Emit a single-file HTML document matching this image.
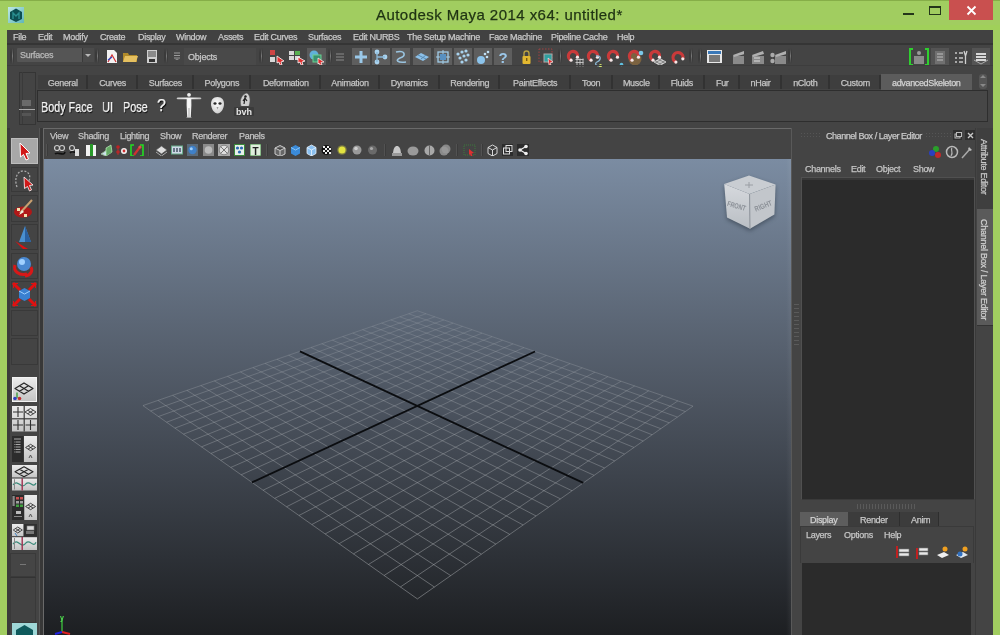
<!DOCTYPE html>
<html><head><meta charset="utf-8"><style>
html,body{margin:0;padding:0;}
body{width:1000px;height:635px;overflow:hidden;position:relative;background:#a1cd60;font-family:"Liberation Sans",sans-serif;}
body>div,body>span,body>svg{position:absolute;display:block;}
.t{white-space:nowrap;line-height:1;will-change:transform;-webkit-text-stroke:0.25px currentColor;}
.c{text-align:center;}
</style></head><body>
<div style="left:0px;top:0px;width:1000px;height:1px;background:#86ae48"></div>
<div style="left:0px;top:25px;width:1000px;height:4.5px;background:#a0d05a"></div>
<svg style="left:8px;top:7px;" width="16" height="16" viewBox="0 0 16 16"><defs><linearGradient id="mi" x1="0" y1="0" x2="1" y2="1"><stop offset="0" stop-color="#bfe9e6"/><stop offset="1" stop-color="#5fb6b9"/></linearGradient></defs><rect width="16" height="16" fill="url(#mi)"/><path d="M8 1.5 L14 5 L14 12 L8 15 L2 12 L2 5Z" fill="#0d4f52"/><path d="M5 12 L5 6 L8 9 L11 6 L11 12" stroke="#2a8f90" stroke-width="1.4" fill="none"/></svg>
<span class="t" style="left:376px;top:6.8px;font-size:15px;letter-spacing:0.45px;color:#1f3313">Autodesk Maya 2014 x64: untitled*</span>
<div style="left:903px;top:13px;width:11px;height:2px;background:#24361a"></div>
<div style="left:929px;top:6px;width:12px;height:9px;border:1px solid #24361a;border-top-width:2px;box-sizing:border-box"></div>
<div style="left:949px;top:0px;width:44px;height:20px;background:#c9504f"></div>
<svg style="left:966px;top:5px;" width="11" height="11" viewBox="0 0 11 11"><path d="M1.5 1.5 L9.5 9.5 M9.5 1.5 L1.5 9.5" stroke="#fff" stroke-width="1.8"/></svg>
<div style="left:7px;top:29.5px;width:986px;height:605.5px;background:#444444"></div>
<div style="left:7px;top:29.5px;width:986px;height:13.5px;background:#414141"></div>
<div style="left:7px;top:42.5px;width:986px;height:2px;background:#353535"></div>
<span class="t" style="left:13.4px;top:33.48px;font-size:9px;color:#c8c8c8;letter-spacing:-0.3px">File</span>
<span class="t" style="left:37.8px;top:33.48px;font-size:9px;color:#c8c8c8;letter-spacing:-0.3px">Edit</span>
<span class="t" style="left:63px;top:33.48px;font-size:9px;color:#c8c8c8;letter-spacing:-0.3px">Modify</span>
<span class="t" style="left:100px;top:33.48px;font-size:9px;color:#c8c8c8;letter-spacing:-0.3px">Create</span>
<span class="t" style="left:137.6px;top:33.48px;font-size:9px;color:#c8c8c8;letter-spacing:-0.3px">Display</span>
<span class="t" style="left:176px;top:33.48px;font-size:9px;color:#c8c8c8;letter-spacing:-0.3px">Window</span>
<span class="t" style="left:217.6px;top:33.48px;font-size:9px;color:#c8c8c8;letter-spacing:-0.3px">Assets</span>
<span class="t" style="left:253.8px;top:33.48px;font-size:9px;color:#c8c8c8;letter-spacing:-0.3px">Edit Curves</span>
<span class="t" style="left:307.9px;top:33.48px;font-size:9px;color:#c8c8c8;letter-spacing:-0.3px">Surfaces</span>
<span class="t" style="left:352.9px;top:33.48px;font-size:9px;color:#c8c8c8;letter-spacing:-0.3px">Edit NURBS</span>
<span class="t" style="left:406.9px;top:33.48px;font-size:9px;color:#c8c8c8;letter-spacing:-0.3px">The Setup Machine</span>
<span class="t" style="left:489px;top:33.48px;font-size:9px;color:#c8c8c8;letter-spacing:-0.3px">Face Machine</span>
<span class="t" style="left:550.9px;top:33.48px;font-size:9px;color:#c8c8c8;letter-spacing:-0.3px">Pipeline Cache</span>
<span class="t" style="left:616.8px;top:33.48px;font-size:9px;color:#c8c8c8;letter-spacing:-0.3px">Help</span>
<div style="left:10px;top:47px;width:4px;height:18px;background:linear-gradient(180deg,rgba(68,68,68,0),#3a3a3a 30%,#3a3a3a 70%,rgba(68,68,68,0))"></div>
<div style="left:11.5px;top:48px;width:1px;height:16px;background:linear-gradient(180deg,rgba(120,120,120,0),#7a7a7a 50%,rgba(120,120,120,0))"></div>
<div style="left:17px;top:48px;width:77px;height:14px;background:#555;border-radius:1px"></div>
<div style="left:81.5px;top:48px;width:12px;height:14px;background:#4b4b4b;border-left:1px solid #3a3a3a;box-sizing:border-box"></div>
<svg style="left:84px;top:53px;" width="8" height="5" viewBox="0 0 8 5"><path d="M1 1 L7 1 L4 4Z" fill="#b8b8b8"/></svg>
<span class="t" style="left:19.5px;top:51.48px;font-size:9px;color:#b9b9b9;letter-spacing:-0.3px">Surfaces</span>
<div style="left:95px;top:48px;width:4px;height:16px;background:linear-gradient(180deg,rgba(68,68,68,0),#3a3a3a 30%,#3a3a3a 70%,rgba(68,68,68,0))"></div>
<div style="left:96.5px;top:49px;width:1px;height:14px;background:linear-gradient(180deg,rgba(120,120,120,0),#7a7a7a 50%,rgba(120,120,120,0))"></div>
<svg style="left:105px;top:49px;" width="13" height="15" viewBox="0 0 13 15"><path d="M2 1 L9 1 L12 4 L12 14 L2 14Z" fill="#f2f2f2"/><path d="M3 13 L7 6 L11 13" stroke="#d23030" stroke-width="1.2" fill="none"/><path d="M3 11 L7 8" stroke="#2850d0" stroke-width="1.2"/></svg>
<svg style="left:122px;top:50px;" width="17" height="13" viewBox="0 0 17 13"><path d="M1 3 L6 3 L7 5 L15 5 L15 12 L1 12Z" fill="#b08a2a"/><path d="M1 12 L3 6 L16 6 L14 12Z" fill="#e5c060"/></svg>
<svg style="left:146px;top:49px;" width="12" height="15" viewBox="0 0 12 15"><rect x="1" y="1" width="10" height="13" fill="#cfcfcf"/><rect x="2" y="2" width="8" height="6" fill="#8a8a8a"/><rect x="3" y="10" width="6" height="3" fill="#333"/></svg>
<div style="left:164px;top:48px;width:4px;height:16px;background:linear-gradient(180deg,rgba(68,68,68,0),#3a3a3a 30%,#3a3a3a 70%,rgba(68,68,68,0))"></div>
<div style="left:165.5px;top:49px;width:1px;height:14px;background:linear-gradient(180deg,rgba(120,120,120,0),#7a7a7a 50%,rgba(120,120,120,0))"></div>
<svg style="left:173px;top:51px;" width="8" height="10" viewBox="0 0 8 10"><path d="M1 2 H7 M1 4.5 H7 M1 7 H7" stroke="#9a9a9a" stroke-width="1"/><path d="M2 9 L4 7.5 L6 9" fill="#888"/></svg>
<div style="left:184px;top:48px;width:72px;height:16.5px;background:#494949"></div>
<span class="t" style="left:187.8px;top:53.48px;font-size:9px;color:#c8c8c8;letter-spacing:-0.2px">Objects</span>
<div style="left:259px;top:48px;width:4px;height:16px;background:linear-gradient(180deg,rgba(68,68,68,0),#3a3a3a 30%,#3a3a3a 70%,rgba(68,68,68,0))"></div>
<div style="left:260.5px;top:49px;width:1px;height:14px;background:linear-gradient(180deg,rgba(120,120,120,0),#7a7a7a 50%,rgba(120,120,120,0))"></div>
<svg style="left:268px;top:49px;" width="18" height="16" viewBox="0 0 18 16"><rect x="2" y="1" width="5" height="5" fill="#d04545"/><rect x="2" y="8" width="5" height="5" fill="#d8d8d8"/><path d="M9 7 L16 12 L13 13 L14 16 L12 16 L11 13 L9 14Z" fill="#e03030" stroke="#fff" stroke-width="0.8"/></svg>
<svg style="left:288px;top:49px;" width="18" height="16" viewBox="0 0 18 16"><rect x="1" y="2" width="5" height="4" fill="#d8d8d8"/><rect x="7" y="2" width="5" height="4" fill="#58b050"/><rect x="1" y="7" width="5" height="4" fill="#d8d8d8"/><rect x="7" y="7" width="5" height="4" fill="#d8d8d8"/><path d="M10 8 L17 12 L14 13 L15 16 L13 16 L12 13 L10 14Z" fill="#e03030" stroke="#fff" stroke-width="0.8"/></svg>
<div style="left:307px;top:48px;width:19px;height:18px;background:#5a5a5a"></div>
<svg style="left:308px;top:49px;" width="18" height="16" viewBox="0 0 18 16"><circle cx="6" cy="6" r="4.5" fill="#60b0d8"/><rect x="5" y="6" width="8" height="7" fill="#3a9070" stroke="#6ad090"/><path d="M10 9 L16 13 L13 13.5 L14 16 L12 16 L11 14 L10 15Z" fill="#e03030" stroke="#fff" stroke-width="0.7"/></svg>
<div style="left:328px;top:48px;width:4px;height:16px;background:linear-gradient(180deg,rgba(68,68,68,0),#3a3a3a 30%,#3a3a3a 70%,rgba(68,68,68,0))"></div>
<div style="left:329.5px;top:49px;width:1px;height:14px;background:linear-gradient(180deg,rgba(120,120,120,0),#7a7a7a 50%,rgba(120,120,120,0))"></div>
<svg style="left:334px;top:51px;" width="12" height="12" viewBox="0 0 12 12"><path d="M2 3 H10 M2 6 H10 M2 9 H10" stroke="#8a8a8a"/></svg>
<div style="left:352px;top:47.6px;width:18px;height:18.4px;background:#5e5e5e"></div>
<div style="left:372.4px;top:47.6px;width:18px;height:18.4px;background:#5e5e5e"></div>
<div style="left:392.4px;top:47.6px;width:18px;height:18.4px;background:#5e5e5e"></div>
<div style="left:413px;top:47.6px;width:18px;height:18.4px;background:#5e5e5e"></div>
<div style="left:433.6px;top:47.6px;width:18px;height:18.4px;background:#5e5e5e"></div>
<div style="left:453.6px;top:47.6px;width:18px;height:18.4px;background:#5e5e5e"></div>
<div style="left:473.6px;top:47.6px;width:18px;height:18.4px;background:#5e5e5e"></div>
<div style="left:494.4px;top:47.6px;width:18px;height:18.4px;background:#5e5e5e"></div>
<svg style="left:352px;top:47.6px;" width="18" height="18" viewBox="0 0 18 18"><path d="M9 3 V15 M3 9 H15" stroke="#9ac8e8" stroke-width="3"/></svg>
<svg style="left:372.4px;top:47.6px;" width="18" height="18" viewBox="0 0 18 18"><circle cx="5" cy="4" r="2.4" fill="#a9d3ef"/><circle cx="5" cy="14" r="2.4" fill="#a9d3ef"/><circle cx="13" cy="9" r="2.4" fill="#a9d3ef"/><path d="M5 4 V14 M5 9 H13" stroke="#8ab8d8" stroke-width="1.3"/></svg>
<svg style="left:392.4px;top:47.6px;" width="18" height="18" viewBox="0 0 18 18"><path d="M4 4 C14 2 14 8 8 10 C3 12 5 15 14 14" stroke="#9ac4e0" stroke-width="1.6" fill="none"/></svg>
<svg style="left:413px;top:47.6px;" width="18" height="18" viewBox="0 0 18 18"><path d="M2 9 L8 5 L16 9 L10 13Z" fill="#8cc0e8"/><path d="M5 7 L13 11 M8 11 L13 7" stroke="#5a8ab0"/></svg>
<svg style="left:433.6px;top:47.6px;" width="18" height="18" viewBox="0 0 18 18"><rect x="4" y="4" width="10" height="10" fill="none" stroke="#a0cce8" stroke-width="1.3"/><path d="M9 2 V16 M2 9 H16" stroke="#a0cce8"/><rect x="6" y="6" width="6" height="6" fill="#5890c0"/></svg>
<svg style="left:453.6px;top:47.6px;" width="18" height="18" viewBox="0 0 18 18"><g fill="#a9d3ef"><circle cx="4" cy="6" r="1.6"/><circle cx="8" cy="4" r="1.6"/><circle cx="12" cy="3" r="1.6"/><circle cx="6" cy="10" r="1.6"/><circle cx="10" cy="8" r="1.6"/><circle cx="14" cy="7" r="1.6"/><circle cx="8" cy="14" r="1.6"/><circle cx="12" cy="12" r="1.6"/></g></svg>
<svg style="left:473.6px;top:47.6px;" width="18" height="18" viewBox="0 0 18 18"><circle cx="7" cy="12" r="4" fill="#8cc4ec"/><g fill="#c0e0f5"><circle cx="11" cy="6" r="1.3"/><circle cx="14" cy="4" r="1.3"/><circle cx="13" cy="9" r="1.3"/></g></svg>
<svg style="left:494.4px;top:47.6px;will-change:transform;" width="18" height="18" viewBox="0 0 18 18"><text x="9" y="15" font-family="Liberation Sans" font-weight="bold" font-size="15" fill="#9cc8ea" text-anchor="middle">?</text></svg>
<svg style="left:521px;top:49px;" width="11" height="16" viewBox="0 0 11 16"><path d="M3 7 V4.5 A2.5 2.5 0 0 1 8 4.5 V7" stroke="#b8a040" stroke-width="1.4" fill="none"/><rect x="1.5" y="7" width="8" height="8" rx="1" fill="#e3b830"/><rect x="5" y="9" width="1.4" height="3" fill="#7a5a10"/></svg>
<svg style="left:538px;top:48px;" width="17" height="17" viewBox="0 0 17 17"><rect x="1" y="1" width="13" height="13" fill="none" stroke="#a04040" stroke-dasharray="1.5 1.5"/><rect x="6" y="6" width="8" height="8" fill="#30a0a0" stroke="#aaa"/><path d="M10 10 L15 14 L12 15 L13 17 L11 17Z" fill="#e03030" stroke="#fff" stroke-width="0.6"/></svg>
<div style="left:558px;top:48px;width:4px;height:16px;background:linear-gradient(180deg,rgba(68,68,68,0),#3a3a3a 30%,#3a3a3a 70%,rgba(68,68,68,0))"></div>
<div style="left:559.5px;top:49px;width:1px;height:14px;background:linear-gradient(180deg,rgba(120,120,120,0),#7a7a7a 50%,rgba(120,120,120,0))"></div>
<svg style="left:566px;top:49px;" width="19" height="18" viewBox="0 0 19 18"><path d="M11.44 8.19 A4.6 4.6 0 1 0 5.06 11.17" stroke="#c93a3a" stroke-width="3.2" fill="none"/><circle cx="11.44" cy="8.19" r="1.6" fill="#f4e8e8"/><circle cx="5.06" cy="11.17" r="1.6" fill="#f4e8e8"/><path d="M9.5 10.5 h8 M9.5 13.5 h8 M9.5 16.5 h8 M11 9.5 v8 M14 9.5 v8 M17 9.5 v8" stroke="#c8c8c8" stroke-width="0.9"/></svg>
<svg style="left:586px;top:49px;" width="19" height="18" viewBox="0 0 19 18"><path d="M11.44 8.19 A4.6 4.6 0 1 0 5.06 11.17" stroke="#c93a3a" stroke-width="3.2" fill="none"/><circle cx="11.44" cy="8.19" r="1.6" fill="#f4e8e8"/><circle cx="5.06" cy="11.17" r="1.6" fill="#f4e8e8"/><path d="M10 7 C16 6 15 11 11 13 C8 15 10 17 14 17" stroke="#8ab4d0" stroke-width="1.3" fill="none"/><circle cx="14.5" cy="16.5" r="1.6" fill="#d8e870"/></svg>
<svg style="left:606px;top:49px;" width="19" height="18" viewBox="0 0 19 18"><path d="M11.44 8.19 A4.6 4.6 0 1 0 5.06 11.17" stroke="#c93a3a" stroke-width="3.2" fill="none"/><circle cx="11.44" cy="8.19" r="1.6" fill="#f4e8e8"/><circle cx="5.06" cy="11.17" r="1.6" fill="#f4e8e8"/><circle cx="15.5" cy="15.5" r="1.8" fill="#60c0e0"/></svg>
<svg style="left:627px;top:49px;" width="19" height="18" viewBox="0 0 19 18"><circle cx="8" cy="10" r="6.5" fill="#8a6a40" opacity="0.8"/><path d="M11.44 8.19 A4.6 4.6 0 1 0 5.06 11.17" stroke="#c93a3a" stroke-width="3.2" fill="none"/><circle cx="11.44" cy="8.19" r="1.6" fill="#f4e8e8"/><circle cx="5.06" cy="11.17" r="1.6" fill="#f4e8e8"/><circle cx="14" cy="4" r="2.3" fill="#7ac8e8"/></svg>
<svg style="left:648px;top:49px;" width="19" height="18" viewBox="0 0 19 18"><path d="M6 13 L12 9.5 L18 13 L12 16.5Z" fill="#888" stroke="#ddd" stroke-width="0.8"/><path d="M9 11.2 L15 14.8 M15 11.2 L9 14.8" stroke="#ddd" stroke-width="0.8"/><path d="M11.44 8.19 A4.6 4.6 0 1 0 5.06 11.17" stroke="#c93a3a" stroke-width="3.2" fill="none"/><circle cx="11.44" cy="8.19" r="1.6" fill="#f4e8e8"/><circle cx="5.06" cy="11.17" r="1.6" fill="#f4e8e8"/></svg>
<svg style="left:669px;top:49px;" width="19" height="18" viewBox="0 0 19 18"><path d="M13.83 9.79 A5 5 0 1 0 6.89 13.03" stroke="#c93a3a" stroke-width="3.2" fill="none"/><circle cx="13.83" cy="9.79" r="1.6" fill="#f4e8e8"/><circle cx="6.89" cy="13.03" r="1.6" fill="#f4e8e8"/></svg>
<div style="left:689px;top:48px;width:4px;height:16px;background:linear-gradient(180deg,rgba(68,68,68,0),#3a3a3a 30%,#3a3a3a 70%,rgba(68,68,68,0))"></div>
<div style="left:690.5px;top:49px;width:1px;height:14px;background:linear-gradient(180deg,rgba(120,120,120,0),#7a7a7a 50%,rgba(120,120,120,0))"></div>
<div style="left:698px;top:48px;width:4px;height:16px;background:linear-gradient(180deg,rgba(68,68,68,0),#3a3a3a 30%,#3a3a3a 70%,rgba(68,68,68,0))"></div>
<div style="left:699.5px;top:49px;width:1px;height:14px;background:linear-gradient(180deg,rgba(120,120,120,0),#7a7a7a 50%,rgba(120,120,120,0))"></div>
<svg style="left:706px;top:48px;" width="17" height="17" viewBox="0 0 17 17"><rect x="1" y="2" width="15" height="13" fill="#e8e8e8"/><rect x="2" y="3" width="13" height="3" fill="#3a78b8"/><rect x="3" y="7" width="11" height="7" fill="#787878"/></svg>
<svg style="left:731px;top:49px;" width="13" height="16" viewBox="0 0 13 16"><path d="M2 7 L14 7 L14 15 L2 15Z" fill="#8a8a8a"/><path d="M2 6 L13 2 L14 5 L3 8Z" fill="#b0b0b0"/></svg>
<svg style="left:750px;top:49px;" width="14" height="16" viewBox="0 0 14 16"><path d="M2 7 L14 7 L14 15 L2 15Z" fill="#8a8a8a"/><path d="M2 6 L13 2 L14 5 L3 8Z" fill="#b0b0b0"/><path d="M4 9 h6 M4 12 h6" stroke="#ddd"/></svg>
<svg style="left:769px;top:49px;" width="17" height="16" viewBox="0 0 17 16"><circle cx="3.5" cy="6" r="2.2" fill="#aaa"/><circle cx="3.5" cy="12" r="2.2" fill="#aaa"/><g transform="translate(4 0)"><path d="M2 7 L14 7 L14 15 L2 15Z" fill="#8a8a8a"/><path d="M2 6 L13 2 L14 5 L3 8Z" fill="#b0b0b0"/></g></svg>
<div style="left:788px;top:48px;width:4px;height:16px;background:linear-gradient(180deg,rgba(68,68,68,0),#3a3a3a 30%,#3a3a3a 70%,rgba(68,68,68,0))"></div>
<div style="left:789.5px;top:49px;width:1px;height:14px;background:linear-gradient(180deg,rgba(120,120,120,0),#7a7a7a 50%,rgba(120,120,120,0))"></div>
<svg style="left:908px;top:48px;" width="22" height="18" viewBox="0 0 22 18"><path d="M5 1 H2 V17 H5 M17 1 H20 V17 H17" stroke="#2fd02f" stroke-width="2" fill="none"/><rect x="6" y="8" width="10" height="8" fill="#8a8a8a"/><circle cx="11" cy="5" r="2" fill="#9a9a9a"/></svg>
<div style="left:931px;top:48px;width:18px;height:18px;background:#545454"></div>
<svg style="left:932px;top:49px;" width="16" height="16" viewBox="0 0 16 16"><rect x="3" y="2" width="10" height="13" fill="#707070"/><path d="M5 5 h6 M5 8 h6 M5 11 h6" stroke="#c0c0c0"/></svg>
<svg style="left:953px;top:49px;" width="15" height="16" viewBox="0 0 15 16"><path d="M2 4 h2 M6 4 h4 M2 9 h2 M6 9 h4 M2 13 h2 M6 13 h4" stroke="#c8c8c8" stroke-width="1.3"/><path d="M11 2 L12.5 7 L14 2 M12.5 7 V15" stroke="#d0d0d0" stroke-width="1.3" fill="none"/></svg>
<div style="left:971.8px;top:48px;width:18px;height:18px;background:#545454"></div>
<svg style="left:972px;top:49px;" width="18" height="16" viewBox="0 0 18 16"><path d="M4 5 h10 M4 8 h10 M4 11 h10" stroke="#d8d8d8" stroke-width="2"/><path d="M2 11 L9 15 L16 11" stroke="#aaa" fill="none"/></svg>
<div style="left:7px;top:65px;width:986px;height:1px;background:#3d3d3d"></div>
<div style="left:18.5px;top:72px;width:17px;height:53px;background:#444;border:1px solid #353535;box-sizing:border-box"></div>
<div style="left:21.5px;top:72px;width:1px;height:52px;background:#3a3a3a"></div>
<div style="left:22px;top:100px;width:9px;height:5.5px;background:#6a6a6a"></div>
<div style="left:19px;top:109px;width:16px;height:1px;background:#aaa"></div>
<div style="left:22px;top:113px;width:9px;height:3px;background:#555"></div>
<div style="left:37.5px;top:75px;width:50.5px;height:14px;background:#3e3e3e;border-right:2px solid #323232;box-sizing:border-box"></div>
<span class="t c" style="left:37.5px;width:49.5px;top:79px;font-size:9px;color:#c4c4c4;letter-spacing:-0.3px">General</span>
<div style="left:88px;top:75px;width:50px;height:14px;background:#3e3e3e;border-right:2px solid #323232;box-sizing:border-box"></div>
<span class="t c" style="left:88px;width:49px;top:79px;font-size:9px;color:#c4c4c4;letter-spacing:-0.3px">Curves</span>
<div style="left:138px;top:75px;width:55.75px;height:14px;background:#3e3e3e;border-right:2px solid #323232;box-sizing:border-box"></div>
<span class="t c" style="left:138px;width:54.75px;top:79px;font-size:9px;color:#c4c4c4;letter-spacing:-0.3px">Surfaces</span>
<div style="left:193.75px;top:75px;width:56.75px;height:14px;background:#3e3e3e;border-right:2px solid #323232;box-sizing:border-box"></div>
<span class="t c" style="left:193.75px;width:55.75px;top:79px;font-size:9px;color:#c4c4c4;letter-spacing:-0.3px">Polygons</span>
<div style="left:250.5px;top:75px;width:70.5px;height:14px;background:#3e3e3e;border-right:2px solid #323232;box-sizing:border-box"></div>
<span class="t c" style="left:250.5px;width:69.5px;top:79px;font-size:9px;color:#c4c4c4;letter-spacing:-0.3px">Deformation</span>
<div style="left:321px;top:75px;width:59px;height:14px;background:#3e3e3e;border-right:2px solid #323232;box-sizing:border-box"></div>
<span class="t c" style="left:321px;width:58px;top:79px;font-size:9px;color:#c4c4c4;letter-spacing:-0.3px">Animation</span>
<div style="left:380px;top:75px;width:59.5px;height:14px;background:#3e3e3e;border-right:2px solid #323232;box-sizing:border-box"></div>
<span class="t c" style="left:380px;width:58.5px;top:79px;font-size:9px;color:#c4c4c4;letter-spacing:-0.3px">Dynamics</span>
<div style="left:439.5px;top:75px;width:60.5px;height:14px;background:#3e3e3e;border-right:2px solid #323232;box-sizing:border-box"></div>
<span class="t c" style="left:439.5px;width:59.5px;top:79px;font-size:9px;color:#c4c4c4;letter-spacing:-0.3px">Rendering</span>
<div style="left:500px;top:75px;width:71.25px;height:14px;background:#3e3e3e;border-right:2px solid #323232;box-sizing:border-box"></div>
<span class="t c" style="left:500px;width:70.25px;top:79px;font-size:9px;color:#c4c4c4;letter-spacing:-0.3px">PaintEffects</span>
<div style="left:571.25px;top:75px;width:41.25px;height:14px;background:#3e3e3e;border-right:2px solid #323232;box-sizing:border-box"></div>
<span class="t c" style="left:571.25px;width:40.25px;top:79px;font-size:9px;color:#c4c4c4;letter-spacing:-0.3px">Toon</span>
<div style="left:612.5px;top:75px;width:47.5px;height:14px;background:#3e3e3e;border-right:2px solid #323232;box-sizing:border-box"></div>
<span class="t c" style="left:612.5px;width:46.5px;top:79px;font-size:9px;color:#c4c4c4;letter-spacing:-0.3px">Muscle</span>
<div style="left:660px;top:75px;width:44.5px;height:14px;background:#3e3e3e;border-right:2px solid #323232;box-sizing:border-box"></div>
<span class="t c" style="left:660px;width:43.5px;top:79px;font-size:9px;color:#c4c4c4;letter-spacing:-0.3px">Fluids</span>
<div style="left:704.5px;top:75px;width:35.5px;height:14px;background:#3e3e3e;border-right:2px solid #323232;box-sizing:border-box"></div>
<span class="t c" style="left:704.5px;width:34.5px;top:79px;font-size:9px;color:#c4c4c4;letter-spacing:-0.3px">Fur</span>
<div style="left:740px;top:75px;width:42px;height:14px;background:#3e3e3e;border-right:2px solid #323232;box-sizing:border-box"></div>
<span class="t c" style="left:740px;width:41px;top:79px;font-size:9px;color:#c4c4c4;letter-spacing:-0.3px">nHair</span>
<div style="left:782px;top:75px;width:47.5px;height:14px;background:#3e3e3e;border-right:2px solid #323232;box-sizing:border-box"></div>
<span class="t c" style="left:782px;width:46.5px;top:79px;font-size:9px;color:#c4c4c4;letter-spacing:-0.3px">nCloth</span>
<div style="left:829.5px;top:75px;width:51.5px;height:14px;background:#3e3e3e;border-right:2px solid #323232;box-sizing:border-box"></div>
<span class="t c" style="left:829.5px;width:50.5px;top:79px;font-size:9px;color:#c4c4c4;letter-spacing:-0.3px">Custom</span>
<div style="left:881px;top:74px;width:90.5px;height:15.5px;background:#5c5c5c"></div>
<span class="t c" style="left:881px;width:90.5px;top:79px;font-size:9px;color:#d4d4d4;letter-spacing:-0.35px">advancedSkeleton</span>
<svg style="left:977px;top:73px;" width="12" height="17" viewBox="0 0 12 17"><rect x="2" y="1" width="8" height="15" rx="3" fill="#555"/><path d="M3 5 L6 2 L9 5Z M3 11 L6 14 L9 11Z" fill="#888"/></svg>
<div style="left:36.5px;top:89.5px;width:951px;height:32.5px;background:#474747;border:1px solid #2e2e2e;box-sizing:border-box"></div>
<span class="t" style="left:40.5px;top:99.8px;font-size:14.5px;color:#f4f4f4;transform:scaleX(0.745);transform-origin:0 0;font-weight:normal;text-shadow:1px 1px 1px #000;">Body Face</span>
<span class="t" style="left:101.5px;top:99.8px;font-size:14.5px;color:#f4f4f4;transform:scaleX(0.76);transform-origin:0 0;font-weight:normal;text-shadow:1px 1px 1px #000;">UI</span>
<span class="t" style="left:122.5px;top:99.8px;font-size:14.5px;color:#f4f4f4;transform:scaleX(0.745);transform-origin:0 0;font-weight:normal;text-shadow:1px 1px 1px #000;">Pose</span>
<span class="t" style="left:156.5px;top:97.5px;font-size:16px;font-weight:bold;color:#f4f4f4;font-weight:normal;text-shadow:1px 1px 1px #000;">?</span>
<svg style="left:176px;top:92px;" width="27" height="27" viewBox="0 0 27 27"><defs><linearGradient id="sk" x1="0" x2="1"><stop offset="0" stop-color="#c8c8c8"/><stop offset="0.5" stop-color="#fafafa"/><stop offset="1" stop-color="#b8b8b8"/></linearGradient></defs><circle cx="13" cy="2.8" r="1.9" fill="#eee"/><path d="M1.5 5.6 L24.5 5.6 L25.5 6.6 L24.5 7.2 L15.3 7.2 L15.4 13 L15.1 19 L14.8 25 L16 25.6 L10 25.6 L11.2 25 L10.9 19 L10.6 13 L10.7 7.2 L1.5 7.2 L0.5 6.6Z" fill="url(#sk)"/><path d="M13 16 V25" stroke="#777" stroke-width="0.6"/></svg>
<svg style="left:210px;top:96px;" width="15" height="19" viewBox="0 0 15 19"><defs><radialGradient id="mk" cx="0.45" cy="0.4" r="0.6"><stop offset="0" stop-color="#fff"/><stop offset="1" stop-color="#cfcfcf"/></radialGradient></defs><path d="M7.5 1 C3 1 1 4 1 8 C1 13 4.5 17.5 7.5 17.5 C10.5 17.5 14 13 14 8 C14 4 12 1 7.5 1Z" fill="url(#mk)"/><ellipse cx="5" cy="7.5" rx="1.6" ry="1.3" fill="#2a2a2a"/><ellipse cx="10" cy="7.5" rx="1.6" ry="1.3" fill="#2a2a2a"/><path d="M6.5 11 L7.5 13.5 L8.5 11Z" fill="#999"/></svg>
<svg style="left:233px;top:92px;will-change:transform;" width="22" height="24" viewBox="0 0 22 24"><rect x="1" y="15" width="20" height="9" rx="1" fill="#3a3a3a"/><text x="11" y="22.5" font-family="Liberation Sans" font-weight="bold" font-size="9" fill="#e6e6e6" text-anchor="middle">bvh</text><path d="M8 14 C6 8 9 2 14 1 C17 3 18 8 16 14" fill="#cfcfcf" stroke="#555" stroke-width="0.6"/><path d="M11 12 L12 6 L14 9 M12 6 L10 9" stroke="#222" stroke-width="1.2" fill="none"/><circle cx="12.5" cy="4.5" r="1.2" fill="#222"/></svg>
<div style="left:43px;top:128px;width:749px;height:507px;background:#444;border-left:1px solid #6a6a6a;border-top:1px solid #6a6a6a;box-sizing:border-box"></div>
<span class="t" style="left:49.5px;top:132.48px;font-size:9px;color:#c4c4c4;letter-spacing:-0.3px">View</span>
<span class="t" style="left:78px;top:132.48px;font-size:9px;color:#c4c4c4;letter-spacing:-0.3px">Shading</span>
<span class="t" style="left:119.5px;top:132.48px;font-size:9px;color:#c4c4c4;letter-spacing:-0.3px">Lighting</span>
<span class="t" style="left:160px;top:132.48px;font-size:9px;color:#c4c4c4;letter-spacing:-0.3px">Show</span>
<span class="t" style="left:192px;top:132.48px;font-size:9px;color:#c4c4c4;letter-spacing:-0.3px">Renderer</span>
<span class="t" style="left:238.75px;top:132.48px;font-size:9px;color:#c4c4c4;letter-spacing:-0.3px">Panels</span>
<div style="left:46px;top:144px;width:2px;height:12px;background:linear-gradient(90deg,#5e5e5e,#2f2f2f)"></div>
<div style="left:148px;top:144px;width:2px;height:12px;background:linear-gradient(90deg,#5e5e5e,#2f2f2f)"></div>
<div style="left:266px;top:144px;width:2px;height:12px;background:linear-gradient(90deg,#5e5e5e,#2f2f2f)"></div>
<div style="left:383.6px;top:144px;width:2px;height:12px;background:linear-gradient(90deg,#5e5e5e,#2f2f2f)"></div>
<div style="left:455.7px;top:144px;width:2px;height:12px;background:linear-gradient(90deg,#5e5e5e,#2f2f2f)"></div>
<div style="left:480.6px;top:144px;width:2px;height:12px;background:linear-gradient(90deg,#5e5e5e,#2f2f2f)"></div>
<svg style="left:53px;top:144px;" width="13" height="12" viewBox="0 0 13 12"><circle cx="4" cy="4" r="2.5" fill="none" stroke="#ccc" stroke-width="1.2"/><circle cx="9" cy="4" r="2.5" fill="none" stroke="#ccc" stroke-width="1.2"/><path d="M2 10 C5 7 11 13 12 8" stroke="#111" stroke-width="1.6" fill="none"/></svg>
<svg style="left:68px;top:144px;" width="12" height="12" viewBox="0 0 12 12"><circle cx="4" cy="4" r="2.5" fill="none" stroke="#ccc" stroke-width="1.2"/><path d="M2 9 C4 6 8 10 8 7" stroke="#111" stroke-width="1.4" fill="none"/><rect x="7" y="5" width="4" height="7" fill="#ddd"/></svg>
<svg style="left:84.5px;top:144px;" width="12" height="12" viewBox="0 0 12 12"><rect x="1" y="1" width="10" height="11" fill="#f2f2f2"/><rect x="5" y="0" width="3" height="12" fill="#2a9a2a"/></svg>
<svg style="left:100px;top:144px;" width="13" height="12" viewBox="0 0 13 12"><path d="M1 10 L6 12 L12 8 L7 6Z" fill="#cde" stroke="#9b9"/><path d="M6 12 L6 4 L11 1 L12 8" fill="#6a6" stroke="#cfc" stroke-width="0.6"/></svg>
<svg style="left:115px;top:144px;" width="13" height="12" viewBox="0 0 13 12"><circle cx="3" cy="3" r="1.8" fill="#c02020"/><circle cx="3" cy="8" r="1.8" fill="#c02020"/><circle cx="9" cy="7" r="3" fill="#f0f0f0"/><circle cx="9" cy="7" r="1.4" fill="#d03030"/><path d="M3 3 L3 11" stroke="#a33"/></svg>
<svg style="left:130px;top:144px;" width="14" height="12" viewBox="0 0 14 12"><path d="M4 1 H1 V12 H4 M10 1 H13 V12 H10" stroke="#22dd22" stroke-width="1.6" fill="none"/><path d="M4 11 L10 3" stroke="#d03030" stroke-width="2.2"/><circle cx="10" cy="3" r="1.6" fill="#e05050"/></svg>
<svg style="left:155px;top:144px;" width="13" height="12" viewBox="0 0 13 12"><path d="M1 6 L6.5 2 L12 6 L6.5 10Z" fill="#ddd" stroke="#555" stroke-width="0.7"/><path d="M1 8 L6.5 12 L12 8" stroke="#aaa" fill="none"/></svg>
<svg style="left:171px;top:144px;" width="12" height="12" viewBox="0 0 12 12"><rect x="0.5" y="2" width="11" height="8" fill="#cfd8e6" stroke="#6a8"/><path d="M3 4 v4 M6 4 v4 M9 4 v4" stroke="#234" stroke-width="1.2"/></svg>
<svg style="left:187px;top:144px;" width="11" height="12" viewBox="0 0 11 12"><rect x="0" y="0" width="11" height="12" fill="#5a6a7a"/><circle cx="5.5" cy="6" r="4.2" fill="#3f80c8"/><circle cx="4.3" cy="4.8" r="1.5" fill="#9fd0ff"/></svg>
<svg style="left:202.5px;top:144px;" width="11" height="12" viewBox="0 0 11 12"><rect x="0" y="0" width="11" height="12" fill="#8a8a8a"/><circle cx="5.5" cy="6" r="3.8" fill="#bbb"/></svg>
<svg style="left:217.5px;top:144px;" width="12" height="12" viewBox="0 0 12 12"><rect x="0" y="0" width="12" height="12" fill="#aaa"/><circle cx="6" cy="6" r="4.8" fill="#ddd" stroke="#555" stroke-width="0.6"/><path d="M2.5 2.5 L9.5 9.5 M9.5 2.5 L2.5 9.5" stroke="#777"/></svg>
<svg style="left:233.75px;top:144px;" width="11" height="12" viewBox="0 0 11 12"><rect x="0.5" y="0.5" width="10" height="11" fill="#e8f0e8" stroke="#3a8a3a"/><circle cx="3.5" cy="4" r="1.6" fill="#2a6ab0"/><circle cx="7.5" cy="4" r="1.6" fill="#2a6ab0"/><circle cx="5.5" cy="8" r="1.6" fill="#2a6ab0"/></svg>
<svg style="left:249.5px;top:144px;will-change:transform;" width="11" height="12" viewBox="0 0 11 12"><rect x="0" y="0" width="11" height="12" fill="#dfeedd" stroke="#3a8a3a"/><text x="5.5" y="10.5" font-family="Liberation Sans" font-weight="bold" font-size="10" fill="#222" text-anchor="middle">T</text></svg>
<svg style="left:272.5px;top:144px;" width="13" height="12" viewBox="0 0 13 12"><path d="M2 4 L7 1.5 L12 4 L12 10 L7 12.5 L2 10Z M2 4 L7 6.5 L12 4 M7 6.5 V12.5" stroke="#d8d8d8" fill="#666" stroke-width="0.9"/></svg>
<svg style="left:289.6px;top:144px;" width="11" height="12" viewBox="0 0 11 12"><path d="M1 3.5 L5.5 1 L10 3.5 L10 9.5 L5.5 12 L1 9.5Z" fill="#3a8ad8"/><path d="M1 3.5 L5.5 6 L10 3.5" stroke="#8cc8f8" fill="none"/></svg>
<svg style="left:305.5px;top:144px;" width="11" height="12" viewBox="0 0 11 12"><path d="M1 3.5 L5.5 1 L10 3.5 L10 9.5 L5.5 12 L1 9.5Z" fill="#8ac0f0" stroke="#e8f4ff" stroke-width="0.8"/><path d="M1 3.5 L5.5 6 L10 3.5 M5.5 6 V12" stroke="#e8f4ff" stroke-width="0.8" fill="none"/></svg>
<svg style="left:320.6px;top:144px;" width="11" height="12" viewBox="0 0 11 12"><circle cx="5.5" cy="6" r="5" fill="#111"/><path d="M2 2 h2 v2 h-2z M6 2 h2 v2 h-2z M4 4 h2 v2 h-2z M8 4 h2 v2 h-2z M2 6 h2 v2 h-2z M6 6 h2 v2 h-2z M4 8 h2 v2 h-2z M8 8 h2 v2 h-2z" fill="#eee"/></svg>
<svg style="left:337px;top:144px;" width="10" height="12" viewBox="0 0 10 12"><circle cx="5" cy="6" r="3.5" fill="#f0f040"/><circle cx="5" cy="6" r="4.8" fill="#d0d040" opacity="0.4"/></svg>
<svg style="left:352px;top:144px;" width="10" height="12" viewBox="0 0 10 12"><circle cx="5" cy="6" r="4.5" fill="#9a9a9a"/><circle cx="4" cy="4.5" r="1.8" fill="#d0d0d0"/></svg>
<svg style="left:367px;top:144px;" width="11" height="12" viewBox="0 0 11 12"><circle cx="5.5" cy="6" r="4.5" fill="#6a6a6a"/><circle cx="4.5" cy="4.5" r="1.6" fill="#aaa"/></svg>
<svg style="left:390.5px;top:144px;" width="12" height="12" viewBox="0 0 12 12"><path d="M2 11 C2 4 4 2 6 2 C8 2 10 4 10 11Z" fill="#c8c8c8"/><rect x="1" y="9" width="10" height="3" fill="#999"/></svg>
<svg style="left:406.8px;top:144px;" width="12" height="12" viewBox="0 0 12 12"><ellipse cx="6" cy="7" rx="5.5" ry="4.5" fill="#9a9a9a"/></svg>
<svg style="left:423.6px;top:144px;" width="11" height="12" viewBox="0 0 11 12"><circle cx="5.5" cy="6.5" r="5" fill="#a8a8a8"/><path d="M5.5 1.5 V11.5" stroke="#666"/></svg>
<svg style="left:438.6px;top:144px;" width="12" height="12" viewBox="0 0 12 12"><circle cx="5" cy="7" r="4.5" fill="#8a8a8a"/><circle cx="7" cy="5" r="4.5" fill="#9a9a9a" opacity="0.8"/></svg>
<svg style="left:463.2px;top:144px;" width="13" height="12" viewBox="0 0 13 12"><rect x="1" y="1" width="11" height="10" fill="none" stroke="#3a7a3a" stroke-dasharray="1 1"/><path d="M6 5 L11 9 L8.5 9.5 L9.5 12 L8 12.5 L7 10 L6 11Z" fill="#e03030"/></svg>
<svg style="left:487.2px;top:144px;" width="11" height="12" viewBox="0 0 11 12"><path d="M1 3.5 L5.5 1 L10 3.5 L10 9.5 L5.5 12 L1 9.5Z M1 3.5 L5.5 6 L10 3.5 M5.5 6 V12" stroke="#e8e8e8" stroke-width="0.9" fill="#3a3a3a"/></svg>
<svg style="left:502.2px;top:144px;" width="11" height="12" viewBox="0 0 11 12"><rect x="0" y="0" width="11" height="12" fill="#2c2c2c"/><rect x="1.5" y="4" width="6" height="6" fill="none" stroke="#ddd"/><rect x="4" y="1.5" width="6" height="6" fill="none" stroke="#ddd"/></svg>
<svg style="left:517.3px;top:144px;" width="12" height="12" viewBox="0 0 12 12"><rect x="0" y="0" width="12" height="12" fill="#2c2c2c"/><circle cx="3" cy="6" r="1.8" fill="#eee"/><circle cx="9" cy="2.5" r="1.8" fill="#eee"/><circle cx="9" cy="9.5" r="1.8" fill="#eee"/><path d="M3 6 L9 2.5 M3 6 L9 9.5" stroke="#eee" stroke-width="1.2"/></svg>
<svg style="left:43.5px;top:158.5px" width="748.5" height="476.5" viewBox="0 0 748.5 476.5"><defs><linearGradient id="vg" x1="0" y1="0" x2="0" y2="1"><stop offset="0" stop-color="#7b8ca2"/><stop offset="0.5" stop-color="#4d5561"/><stop offset="1" stop-color="#1d1f22"/></linearGradient></defs><rect width="748.5" height="476.5" fill="url(#vg)"/><linearGradient id="gg" gradientUnits="userSpaceOnUse" x1="0" y1="150" x2="0" y2="440"><stop offset="0" stop-color="#a9aeb4" stop-opacity="0.22"/><stop offset="0.45" stop-color="#adb1b5" stop-opacity="0.36"/><stop offset="1" stop-color="#b0b3b6" stop-opacity="0.48"/></linearGradient><path d="M98.95 246.59L373.40 439.92M98.95 246.59L373.33 151.76M114.02 241.39L390.40 428.04M106.59 251.98L381.98 154.75M128.68 236.32L406.70 416.64M114.45 257.52L390.81 157.80M142.94 231.39L422.35 405.70M122.55 263.22L399.84 160.93M156.83 226.59L437.38 395.19M130.89 269.10L409.07 164.12M170.35 221.91L451.84 385.08M139.49 275.15L418.51 167.39M183.52 217.36L465.75 375.35M148.35 281.40L428.16 170.73M196.36 212.93L479.14 365.98M157.50 287.84L438.03 174.14M208.87 208.60L492.04 356.96M166.94 294.49L448.14 177.64M221.07 204.38L504.49 348.26M176.68 301.35L458.48 181.22M232.97 200.27L516.50 339.86M186.75 308.45L469.07 184.88M244.58 196.26L528.09 331.75M197.16 315.78L479.91 188.63M266.97 188.52L550.12 316.35M219.07 331.21L502.40 196.41M277.77 184.78L560.59 309.03M230.61 339.34L514.06 200.45M288.33 181.14L570.72 301.94M242.57 347.76L526.02 204.59M298.64 177.57L580.53 295.08M254.96 356.49L538.29 208.83M308.71 174.09L590.03 288.44M267.82 365.55L550.88 213.19M318.57 170.69L599.24 281.99M281.18 374.96L563.80 217.66M328.20 167.36L608.18 275.75M295.05 384.73L577.06 222.25M337.62 164.10L616.84 269.69M309.47 394.89L590.68 226.96M346.84 160.91L625.25 263.81M324.48 405.47L604.68 231.80M355.86 157.79L633.42 258.10M340.12 416.48L619.06 236.78M364.69 154.74L641.35 252.55M356.41 427.95L633.85 241.90M373.33 151.76L649.06 247.16M373.40 439.92L649.06 247.16" stroke="url(#gg)" stroke-width="1" fill="none"/><path d="M255.91 192.34L539.29 323.92M207.93 323.36L491.01 192.47" stroke="#0b0d10" stroke-width="1.8" fill="none"/></svg>
<div style="left:786px;top:159px;width:5px;height:476px;background:linear-gradient(90deg,rgba(255,255,255,0),rgba(255,255,255,0.05))"></div>
<div style="left:791px;top:128px;width:1px;height:507px;background:#595959"></div>
<svg style="left:720px;top:170px;will-change:transform;filter:drop-shadow(0 2px 2px rgba(25,35,45,0.45));" width="62" height="64" viewBox="0 0 62 64"><defs><linearGradient id="cf" x1="0" y1="0" x2="0" y2="1"><stop offset="0" stop-color="#d6d9dd"/><stop offset="1" stop-color="#b9bec4"/></linearGradient></defs><path d="M4.2 14 L29 5.6 L55.6 14.5 L29.6 24Z" fill="#c9cdd2"/><path d="M4.2 14 L29.6 24 L30 58.8 L7 47.6Z" fill="url(#cf)"/><path d="M29.6 24 L55.6 14.5 L54.4 44.6 L30 58.8Z" fill="#c2c6cb"/><path d="M29.6 24 L30 58.8" stroke="#8f959c" stroke-width="1"/><text x="16.6" y="38.5" font-family="Liberation Sans" font-weight="bold" font-size="7.5" fill="#8a8f96" transform="rotate(16 16.6 35.8)" text-anchor="middle" textLength="19" lengthAdjust="spacingAndGlyphs">FRONT</text><text x="43.2" y="38.5" font-family="Liberation Sans" font-weight="bold" font-size="7.5" fill="#8a8f96" transform="rotate(-22 43.2 35.8)" text-anchor="middle" textLength="18" lengthAdjust="spacingAndGlyphs">RIGHT</text><path d="M25 15 L33 15 M29 12 L29 18" stroke="#9a9ea4" stroke-width="1"/></svg>
<svg style="left:52px;top:612px;will-change:transform;" width="30" height="23" viewBox="0 0 30 23"><path d="M10 6 V20" stroke="#40d040" stroke-width="1.2"/><text x="8" y="8" font-family="Liberation Sans" font-weight="bold" font-size="7" fill="#50e050">y</text><path d="M10 20 L18 22" stroke="#e02020" stroke-width="2"/><path d="M10 20 L3 22" stroke="#2020e0" stroke-width="2"/></svg>
<div style="left:7px;top:128px;width:3px;height:507px;background:#3a3a3a"></div>
<div style="left:38.5px;top:128px;width:1px;height:507px;background:#555"></div>
<div style="left:39.5px;top:128px;width:3.5px;height:507px;background:#383838"></div>
<div style="left:11px;top:138px;width:27px;height:26px;background:#a8a8a8;border:1px solid #bdbdbd;box-sizing:border-box"></div>
<div style="left:11px;top:167px;width:27px;height:25px;background:#444;border:1px solid #393939;box-sizing:border-box"></div>
<div style="left:11px;top:195px;width:27px;height:27px;background:#444;border:1px solid #393939;box-sizing:border-box"></div>
<div style="left:11px;top:224px;width:27px;height:26px;background:#444;border:1px solid #393939;box-sizing:border-box"></div>
<div style="left:11px;top:253px;width:27px;height:26px;background:#444;border:1px solid #393939;box-sizing:border-box"></div>
<div style="left:11px;top:281px;width:27px;height:27px;background:#444;border:1px solid #393939;box-sizing:border-box"></div>
<div style="left:11px;top:310px;width:27px;height:26px;background:#444;border:1px solid #393939;box-sizing:border-box"></div>
<div style="left:11px;top:338px;width:27px;height:27px;background:#444;border:1px solid #393939;box-sizing:border-box"></div>
<svg style="left:11px;top:138px;" width="27" height="26" viewBox="0 0 27 26"><path d="M9 5 L19 15 L15 15.5 L17.5 21 L15 22 L12.5 16.5 L9.5 19Z" fill="#d01818" stroke="#fff" stroke-width="1"/></svg>
<svg style="left:11px;top:167px;" width="27" height="25" viewBox="0 0 27 25"><path d="M6 20 C3 12 6 4 12 4 C18 4 20 9 18 14" stroke="#aaa" stroke-dasharray="2 1.5" stroke-width="1.3" fill="none"/><path d="M13 10 L22 18 L18.5 18.5 L20.5 23 L18.5 24 L16.5 19.5 L13.5 21.5Z" fill="#d01818" stroke="#fff" stroke-width="0.8"/></svg>
<svg style="left:11px;top:195px;" width="27" height="27" viewBox="0 0 27 27"><ellipse cx="12" cy="17" rx="9" ry="5.5" fill="#b01818"/><path d="M9 18 L21 5" stroke="#c8a070" stroke-width="2"/><path d="M8 20 L11 15 L13 17Z" fill="#f0f0e0"/><rect x="6" y="13" width="3" height="3" fill="#f0e0b0"/><rect x="13" y="19" width="3" height="3" fill="#f0e0b0"/></svg>
<svg style="left:11px;top:224px;" width="27" height="26" viewBox="0 0 27 26"><path d="M14 2 L20 18 L8 18Z" fill="#4a90d0"/><path d="M14 2 L20 18 L14 18Z" fill="#2a60a0"/><path d="M4 17 L17 25 L12 25Z" fill="#e01010"/></svg>
<svg style="left:11px;top:253px;" width="27" height="26" viewBox="0 0 27 26"><circle cx="13" cy="11" r="7" fill="#4a88d0"/><circle cx="11" cy="9" r="3" fill="#a0d0ff"/><path d="M4 12 C2 18 8 23 16 21 M20 14 C22 18 20 22 14 23" stroke="#d81818" stroke-width="3" fill="none"/></svg>
<svg style="left:11px;top:281px;" width="27" height="27" viewBox="0 0 27 27"><path d="M2 2 L9 9 M25 2 L18 9 M2 25 L9 18 M25 25 L18 18" stroke="#e01010" stroke-width="3"/><path d="M2 2 h5 v1 h-4 v4 h-1Z M25 2 h-5 v1 h4 v4 h1Z M2 25 h5 v-1 h-4 v-4 h-1Z M25 25 h-5 v-1 h4 v-4 h1Z" fill="#e01010"/><path d="M8 10 L13.5 7 L19 10 L19 17 L13.5 20 L8 17Z" fill="#3a80d0"/><path d="M8 10 L13.5 13 L19 10" stroke="#9fd0ff" fill="none"/></svg>
<svg style="left:12px;top:376.5px;" width="25" height="25" viewBox="0 0 25 25"><defs><linearGradient id="lg" x1="0" y1="0" x2="0" y2="1"><stop offset="0" stop-color="#ececec"/><stop offset="1" stop-color="#c4c4c4"/></linearGradient></defs><rect x="0.5" y="0.5" width="24" height="24" fill="url(#lg)" stroke="#f4f4f4"/><path d="M3 11.5 L12 6.0 L21 11.5 L12 17.0Z M7.5 8.75 L16.5 14.25 M16.5 8.75 L7.5 14.25" stroke="#262626" stroke-width="1.26" fill="none" stroke-linejoin="round"/><path d="M5 21 V15.5" stroke="#40a040" stroke-width="1.4"/><circle cx="3" cy="21.5" r="1.8" fill="#3040c0"/><circle cx="7.5" cy="21.5" r="1.8" fill="#c03030"/></svg>
<svg style="left:12px;top:406px;" width="25" height="25.5" viewBox="0 0 25 25.5"><defs><linearGradient id="lg" x1="0" y1="0" x2="0" y2="1"><stop offset="0" stop-color="#ececec"/><stop offset="1" stop-color="#c4c4c4"/></linearGradient></defs><rect x="0" y="0" width="25" height="25.5" fill="url(#lg)"/><rect x="11.6" y="0" width="1.2" height="25.5" fill="#3a3a3a"/><rect x="0" y="12.2" width="25" height="1.2" fill="#3a3a3a"/><path d="M6 1 V11 M1 6 H11" stroke="#303030" stroke-width="1.1"/><path d="M6 14 V24 M1 19 H11" stroke="#303030" stroke-width="1.1"/><path d="M18.5 14 V24 M13.5 19 H23.5" stroke="#303030" stroke-width="1.1"/><path d="M13.0 6 L18.5 2.5 L24.0 6 L18.5 9.5Z M15.75 4.25 L21.25 7.75 M21.25 4.25 L15.75 7.75" stroke="#262626" stroke-width="0.84" fill="none" stroke-linejoin="round"/></svg>
<svg style="left:12px;top:435.5px;" width="25" height="26" viewBox="0 0 25 26"><defs><linearGradient id="lg" x1="0" y1="0" x2="0" y2="1"><stop offset="0" stop-color="#ececec"/><stop offset="1" stop-color="#c4c4c4"/></linearGradient></defs><rect x="0" y="0" width="11.5" height="26" fill="#2c2c2c"/><rect x="12" y="0" width="13" height="26" fill="url(#lg)"/><path d="M2 3 h7 M3.5 6 h5 M3.5 8.5 h5 M3.5 11 h5 M3.5 13.5 h5 M3.5 16 h5" stroke="#b8b8b8" stroke-width="0.9"/><path d="M2 6 h1 M2 8.5 h1 M2 11 h1 M2 13.5 h1 M2 16 h1" stroke="#777"/><path d="M13.600000000000001 11.5 L18.6 8.3 L23.6 11.5 L18.6 14.7Z M16.1 9.9 L21.1 13.1 M21.1 9.9 L16.1 13.1" stroke="#262626" stroke-width="0.84" fill="none" stroke-linejoin="round"/><path d="M17 22 L18.5 19 L20 22" stroke="#555" fill="none"/></svg>
<svg style="left:12px;top:465.2px;" width="25" height="25.5" viewBox="0 0 25 25.5"><defs><linearGradient id="lg" x1="0" y1="0" x2="0" y2="1"><stop offset="0" stop-color="#ececec"/><stop offset="1" stop-color="#c4c4c4"/></linearGradient></defs><rect x="0" y="0" width="25" height="12.8" fill="url(#lg)"/><path d="M3 6.8 L12 1.7999999999999998 L21 6.8 L12 11.8Z M7.5 4.3 L16.5 9.3 M16.5 4.3 L7.5 9.3" stroke="#262626" stroke-width="1.1199999999999999" fill="none" stroke-linejoin="round"/><rect x="0" y="13.2" width="25" height="12.3" fill="url(#lg)"/><path d="M1 19.965 C6 13.2 9 25.5 14 18.735 C18 14.43 21 24.27 24 18.12" stroke="#3a8a7a" stroke-width="1.2" fill="none"/><rect x="9.5" y="13.2" width="1.4" height="12.3" fill="#a03050"/><rect x="2" y="14.2" width="1" height="10.3" fill="#888"/><rect x="0" y="12.6" width="25" height="0.8" fill="#333"/></svg>
<svg style="left:12px;top:494.5px;" width="25" height="25.5" viewBox="0 0 25 25.5"><defs><linearGradient id="lg" x1="0" y1="0" x2="0" y2="1"><stop offset="0" stop-color="#ececec"/><stop offset="1" stop-color="#c4c4c4"/></linearGradient></defs><rect x="0" y="0" width="12" height="25.5" fill="#2c2c2c"/><rect x="12.3" y="0" width="12.7" height="25.5" fill="url(#lg)"/><rect x="0.5" y="1" width="2.2" height="10" fill="#8a8a8a"/><rect x="4" y="2" width="3" height="2.5" fill="#c85050"/><rect x="8" y="2" width="3" height="2.5" fill="#c85050"/><rect x="4" y="6" width="3" height="2.5" fill="#a0a0a0"/><rect x="8" y="6" width="3" height="2.5" fill="#a0a0a0"/><rect x="4" y="9.5" width="3" height="2.5" fill="#40a040"/><rect x="8" y="9.5" width="3" height="2.5" fill="#40a040"/><rect x="4" y="16" width="5" height="3" fill="#bbb"/><rect x="2" y="21" width="8" height="1" fill="#888"/><path d="M13.600000000000001 11.5 L18.6 8.3 L23.6 11.5 L18.6 14.7Z M16.1 9.9 L21.1 13.1 M21.1 9.9 L16.1 13.1" stroke="#262626" stroke-width="0.84" fill="none" stroke-linejoin="round"/><path d="M17 22 L18.5 19 L20 22" stroke="#555" fill="none"/></svg>
<svg style="left:12px;top:524.2px;" width="25" height="26" viewBox="0 0 25 26"><defs><linearGradient id="lg" x1="0" y1="0" x2="0" y2="1"><stop offset="0" stop-color="#ececec"/><stop offset="1" stop-color="#c4c4c4"/></linearGradient></defs><rect x="0" y="0" width="11.5" height="12.5" fill="url(#lg)"/><rect x="11.8" y="0" width="13.2" height="12.5" fill="#2f2f2f"/><path d="M1.2999999999999998 6 L5.8 3 L10.3 6 L5.8 9Z M3.55 4.5 L8.05 7.5 M8.05 4.5 L3.55 7.5" stroke="#262626" stroke-width="0.77" fill="none" stroke-linejoin="round"/><path d="M3 9 l2 3" stroke="#4080c0"/><rect x="15" y="2" width="7" height="4" fill="#d8d8d8" stroke="#888" stroke-width="0.6"/><rect x="14" y="7" width="8" height="3" fill="#777"/><rect x="0" y="13" width="25" height="13" fill="url(#lg)"/><path d="M1 20.15 C6 13 9 26 14 18.85 C18 14.3 21 24.700000000000003 24 18.2" stroke="#3a8a7a" stroke-width="1.2" fill="none"/><rect x="9.5" y="13" width="1.4" height="13" fill="#a03050"/><rect x="2" y="14" width="1" height="11" fill="#888"/><rect x="0" y="12.4" width="25" height="0.8" fill="#333"/></svg>
<div style="left:10px;top:552.5px;width:26px;height:24.5px;background:#454545;border:1px solid #3a3a3a;box-sizing:border-box"></div>
<div style="left:10px;top:577px;width:26px;height:46px;background:#424242;border:1px solid #393939;border-top-color:#333;box-sizing:border-box"></div>
<div style="left:20px;top:564px;width:6px;height:1px;background:#777"></div>
<svg style="left:12px;top:623px;" width="25" height="12" viewBox="0 0 25 12"><rect width="25" height="12" fill="#9fd8d8"/><path d="M12.5 2 L21 7 L21 12 L4 12 L4 7Z" fill="#0f5a5c"/></svg>
<div style="left:800.5px;top:177px;width:174px;height:323px;background:#2b2b2b;border:1px solid #505050;border-bottom-color:#3a3a3a;box-sizing:border-box"></div>
<div style="left:801.5px;top:178px;width:172px;height:1.5px;background:#383838"></div>
<div style="left:794px;top:304px;width:5px;height:1px;background:#5a5a5a"></div>
<div style="left:794px;top:308px;width:5px;height:1px;background:#5a5a5a"></div>
<div style="left:794px;top:312px;width:5px;height:1px;background:#5a5a5a"></div>
<div style="left:794px;top:316px;width:5px;height:1px;background:#5a5a5a"></div>
<div style="left:794px;top:320px;width:5px;height:1px;background:#5a5a5a"></div>
<div style="left:794px;top:324px;width:5px;height:1px;background:#5a5a5a"></div>
<div style="left:794px;top:328px;width:5px;height:1px;background:#5a5a5a"></div>
<div style="left:794px;top:332px;width:5px;height:1px;background:#5a5a5a"></div>
<div style="left:794px;top:336px;width:5px;height:1px;background:#5a5a5a"></div>
<div style="left:794px;top:340px;width:5px;height:1px;background:#5a5a5a"></div>
<div style="left:794px;top:344px;width:5px;height:1px;background:#5a5a5a"></div>
<span class="t" style="left:826.4px;top:131.7px;font-size:9px;color:#c8c8c8;letter-spacing:-0.45px">Channel Box / Layer Editor</span>
<div style="left:801px;top:133px;width:1px;height:1px;background:#555"></div>
<div style="left:801px;top:136px;width:1px;height:1px;background:#555"></div>
<div style="left:804px;top:133px;width:1px;height:1px;background:#555"></div>
<div style="left:804px;top:136px;width:1px;height:1px;background:#555"></div>
<div style="left:807px;top:133px;width:1px;height:1px;background:#555"></div>
<div style="left:807px;top:136px;width:1px;height:1px;background:#555"></div>
<div style="left:810px;top:133px;width:1px;height:1px;background:#555"></div>
<div style="left:810px;top:136px;width:1px;height:1px;background:#555"></div>
<div style="left:813px;top:133px;width:1px;height:1px;background:#555"></div>
<div style="left:813px;top:136px;width:1px;height:1px;background:#555"></div>
<div style="left:816px;top:133px;width:1px;height:1px;background:#555"></div>
<div style="left:816px;top:136px;width:1px;height:1px;background:#555"></div>
<div style="left:819px;top:133px;width:1px;height:1px;background:#555"></div>
<div style="left:819px;top:136px;width:1px;height:1px;background:#555"></div>
<div style="left:926px;top:133px;width:1px;height:1px;background:#555"></div>
<div style="left:926px;top:136px;width:1px;height:1px;background:#555"></div>
<div style="left:929px;top:133px;width:1px;height:1px;background:#555"></div>
<div style="left:929px;top:136px;width:1px;height:1px;background:#555"></div>
<div style="left:932px;top:133px;width:1px;height:1px;background:#555"></div>
<div style="left:932px;top:136px;width:1px;height:1px;background:#555"></div>
<div style="left:935px;top:133px;width:1px;height:1px;background:#555"></div>
<div style="left:935px;top:136px;width:1px;height:1px;background:#555"></div>
<div style="left:938px;top:133px;width:1px;height:1px;background:#555"></div>
<div style="left:938px;top:136px;width:1px;height:1px;background:#555"></div>
<div style="left:941px;top:133px;width:1px;height:1px;background:#555"></div>
<div style="left:941px;top:136px;width:1px;height:1px;background:#555"></div>
<div style="left:944px;top:133px;width:1px;height:1px;background:#555"></div>
<div style="left:944px;top:136px;width:1px;height:1px;background:#555"></div>
<div style="left:947px;top:133px;width:1px;height:1px;background:#555"></div>
<div style="left:947px;top:136px;width:1px;height:1px;background:#555"></div>
<div style="left:950px;top:133px;width:1px;height:1px;background:#555"></div>
<div style="left:950px;top:136px;width:1px;height:1px;background:#555"></div>
<div style="left:952.5px;top:130px;width:9.5px;height:10px;background:#2f2f2f"></div>
<div style="left:965px;top:130px;width:9.5px;height:10px;background:#2f2f2f"></div>
<svg style="left:953px;top:130.5px;" width="9" height="9" viewBox="0 0 9 9"><rect x="2" y="3" width="5" height="4" fill="none" stroke="#bbb"/><rect x="3.5" y="1.5" width="5" height="4" fill="#2f2f2f" stroke="#bbb"/></svg>
<svg style="left:965.5px;top:130.5px;" width="9" height="9" viewBox="0 0 9 9"><path d="M2 2 L7 7 M7 2 L2 7" stroke="#c8c8c8" stroke-width="1.4"/></svg>
<svg style="left:927px;top:145px;" width="16" height="14" viewBox="0 0 16 14"><circle cx="9" cy="4" r="3" fill="#2aa02a"/><circle cx="5" cy="8" r="3" fill="#2a40c0"/><circle cx="11" cy="10" r="3" fill="#c02a2a"/></svg>
<svg style="left:945px;top:145px;" width="14" height="14" viewBox="0 0 14 14"><circle cx="7" cy="7" r="5.5" fill="none" stroke="#b8b8b8" stroke-width="1.5"/><path d="M7 3 C5 5 9 7 6 11" stroke="#b8b8b8" stroke-width="1.2" fill="none"/></svg>
<svg style="left:961px;top:145px;" width="12" height="14" viewBox="0 0 12 14"><path d="M1 13 L9 4" stroke="#aaa" stroke-width="1.5"/><path d="M8 2 L11 5 L9 6 L7 4Z" fill="#bbb"/></svg>
<span class="t" style="left:804.5px;top:164.98px;font-size:9px;color:#c4c4c4;letter-spacing:-0.3px">Channels</span>
<span class="t" style="left:850.5px;top:164.98px;font-size:9px;color:#c4c4c4;letter-spacing:-0.3px">Edit</span>
<span class="t" style="left:876.4px;top:164.98px;font-size:9px;color:#c4c4c4;letter-spacing:-0.3px">Object</span>
<span class="t" style="left:912.9px;top:164.98px;font-size:9px;color:#c4c4c4;letter-spacing:-0.3px">Show</span>
<div style="left:857px;top:504px;width:1px;height:5px;background:#5a5a5a"></div>
<div style="left:860px;top:504px;width:1px;height:5px;background:#5a5a5a"></div>
<div style="left:863px;top:504px;width:1px;height:5px;background:#5a5a5a"></div>
<div style="left:866px;top:504px;width:1px;height:5px;background:#5a5a5a"></div>
<div style="left:869px;top:504px;width:1px;height:5px;background:#5a5a5a"></div>
<div style="left:872px;top:504px;width:1px;height:5px;background:#5a5a5a"></div>
<div style="left:875px;top:504px;width:1px;height:5px;background:#5a5a5a"></div>
<div style="left:878px;top:504px;width:1px;height:5px;background:#5a5a5a"></div>
<div style="left:881px;top:504px;width:1px;height:5px;background:#5a5a5a"></div>
<div style="left:884px;top:504px;width:1px;height:5px;background:#5a5a5a"></div>
<div style="left:887px;top:504px;width:1px;height:5px;background:#5a5a5a"></div>
<div style="left:890px;top:504px;width:1px;height:5px;background:#5a5a5a"></div>
<div style="left:893px;top:504px;width:1px;height:5px;background:#5a5a5a"></div>
<div style="left:896px;top:504px;width:1px;height:5px;background:#5a5a5a"></div>
<div style="left:899px;top:504px;width:1px;height:5px;background:#5a5a5a"></div>
<div style="left:902px;top:504px;width:1px;height:5px;background:#5a5a5a"></div>
<div style="left:905px;top:504px;width:1px;height:5px;background:#5a5a5a"></div>
<div style="left:908px;top:504px;width:1px;height:5px;background:#5a5a5a"></div>
<div style="left:911px;top:504px;width:1px;height:5px;background:#5a5a5a"></div>
<div style="left:914px;top:504px;width:1px;height:5px;background:#5a5a5a"></div>
<div style="left:800.3px;top:512px;width:47.6px;height:14px;background:#5d5d5d"></div>
<div style="left:848px;top:512px;width:51.5px;height:14px;background:#3c3c3c;border-right:1px solid #2e2e2e;box-sizing:border-box"></div>
<div style="left:899.6px;top:512px;width:39px;height:14px;background:#3c3c3c;border-right:1px solid #2e2e2e;box-sizing:border-box"></div>
<span class="t" style="left:809.8px;top:516.48px;font-size:9px;color:#d2d2d2;letter-spacing:-0.3px">Display</span>
<span class="t" style="left:859.6px;top:516.48px;font-size:9px;color:#c8c8c8;letter-spacing:-0.3px">Render</span>
<span class="t" style="left:911px;top:516.48px;font-size:9px;color:#c8c8c8;letter-spacing:-0.3px">Anim</span>
<div style="left:800px;top:526px;width:174px;height:37px;background:#444;border:1px solid #3a3a3a;border-bottom:none;box-sizing:border-box"></div>
<span class="t" style="left:806.4px;top:530.98px;font-size:9px;color:#c4c4c4;letter-spacing:-0.3px">Layers</span>
<span class="t" style="left:843.5px;top:530.98px;font-size:9px;color:#c4c4c4;letter-spacing:-0.3px">Options</span>
<span class="t" style="left:884px;top:530.98px;font-size:9px;color:#c4c4c4;letter-spacing:-0.3px">Help</span>
<svg style="left:895px;top:545px;" width="16" height="14" viewBox="0 0 16 14"><rect x="1" y="1" width="2" height="12" fill="#c02020"/><path d="M4 4 h10 v3 h-10z M4 8 h10 v3 h-10z" fill="#e8e8e8" stroke="#777" stroke-width="0.6"/></svg>
<svg style="left:914.5px;top:545px;" width="14" height="14" viewBox="0 0 14 14"><rect x="1" y="3" width="2" height="11" fill="#c02020"/><path d="M4 3 h9 v3 h-9z M4 7 h9 v3 h-9z" fill="#e8e8e8" stroke="#777" stroke-width="0.6"/></svg>
<svg style="left:936px;top:544px;" width="14" height="15" viewBox="0 0 14 15"><path d="M1 11 L8 8 L13 11 L6 14Z" fill="#f0f0f0"/><circle cx="9" cy="5" r="2.5" fill="#f0a020"/></svg>
<svg style="left:955px;top:544px;" width="14" height="15" viewBox="0 0 14 15"><path d="M1 11 L8 8 L13 11 L6 14Z" fill="#e0e8f0"/><circle cx="5" cy="10" r="2.5" fill="#3070c0"/><circle cx="10" cy="5" r="2.5" fill="#f0a020"/></svg>
<div style="left:802px;top:563px;width:168.5px;height:72px;background:#2b2b2b"></div>
<div style="left:975px;top:128px;width:1px;height:507px;background:#3a3a3a"></div>
<div style="left:976.5px;top:127.5px;width:16px;height:81px;background:#3f3f3f"></div>
<div style="left:976.5px;top:208.5px;width:16px;height:116px;background:#5a5a5a"></div>
<div style="left:976.5px;top:324.5px;width:16px;height:6px;background:#444;border-top:1px solid #333;box-sizing:border-box"></div>
<span class="t" style="left:979px;top:139px;font-size:9px;color:#c8c8c8;letter-spacing:-0.25px;writing-mode:vertical-rl">Attribute Editor</span>
<span class="t" style="left:979px;top:219px;font-size:9px;color:#d0d0d0;letter-spacing:-0.25px;writing-mode:vertical-rl">Channel Box / Layer Editor</span>
</body></html>
